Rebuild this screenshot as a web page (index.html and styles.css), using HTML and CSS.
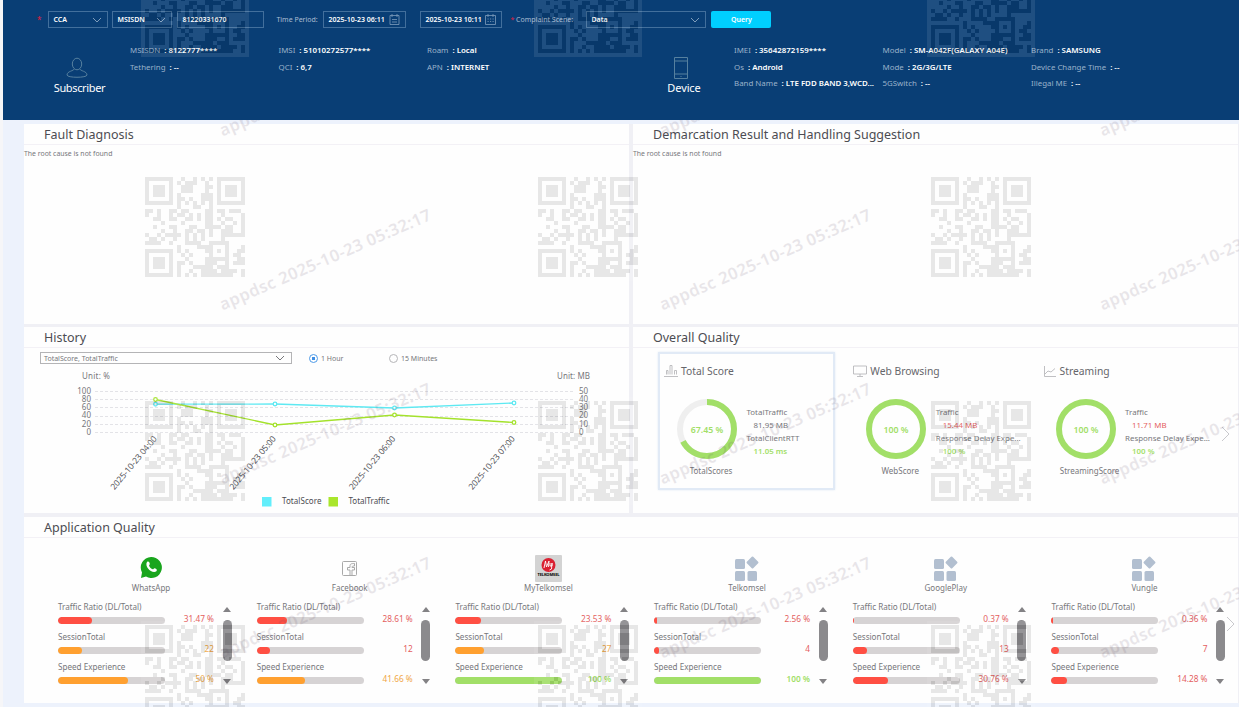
FILE: index.html
```
<!DOCTYPE html>
<html lang="en">
<head>
  <meta charset="UTF-8" />
  <title>Complaint Analysis</title>
  <link rel="stylesheet" href="styles.css">
</head>
<body>
  <header class="top">
    <form class="filters">
      <span class="star">*</span>
      <div class="field w60">CCA <svg class="chev" viewBox="0 0 10 6"><path d="M1 1l4 4 4-4"/></svg></div>
      <div class="field w60 type">MSISDN <svg class="chev" viewBox="0 0 10 6"><path d="M1 1l4 4 4-4"/></svg></div>
      <div class="field w87">81220331670</div>
      <label class="time-label">Time Period:</label>
      <div class="field w83">2025-10-23 06:11 <svg class="cal" viewBox="0 0 11 11"><path d="M1 1.500h9v9H1zM3 0v3M8 0v3M3 5.500h5M3 8h5"/></svg></div>
      <div class="field w82">2025-10-23 10:11 <svg class="cal" viewBox="0 0 11 11"><path d="M.5 1.500h10v9H.5zM3 0v3M8 0v3M2.500 5h1.200M5 5h1.200M7.500 5h1.200M2.500 7.500h1.200M5 7.500h1.200M7.500 7.500h1.200"/></svg></div>
      <label class="scene-label"><span class="star">*</span> Complaint Scene:</label>
      <div class="field w120">Data <svg class="chev" viewBox="0 0 10 6"><path d="M1 1l4 4 4-4"/></svg></div>
      <button type="button" class="query">Query</button>
    </form>

    <div class="info">
      <div class="who">
        <svg class="who-icon" width="22" height="22" viewBox="0 0 22 22"><ellipse cx="11" cy="7" rx="4.700" ry="5.800"/><path d="M8 12c0 2-7 2-7 6 0 3 20 3 20 0 0-4-7-4-7-6"/></svg>
        <span>Subscriber</span>
      </div>
      <dl class="facts">
        <div><dt>MSISDN</dt><dd>8122777****</dd></div>
        <div><dt>IMSI</dt><dd>51010272577****</dd></div>
        <div><dt>Roam</dt><dd>Local</dd></div>
        <div><dt>Tethering</dt><dd>--</dd></div>
        <div><dt>QCI</dt><dd>6,7</dd></div>
        <div><dt>APN</dt><dd>INTERNET</dd></div>
      </dl>
      <div class="who device">
        <svg class="who-icon" width="22" height="22" viewBox="0 0 22 22"><path d="M4.500.5h13v21h-13zM4.500 4h13M4.500 17h13M10.500 19.500h1"/></svg>
        <span>Device</span>
      </div>
      <dl class="facts">
        <div><dt>IMEI</dt><dd>35642872159****</dd></div>
        <div><dt>Model</dt><dd>SM-A042F(GALAXY A04E)</dd></div>
        <div><dt>Brand</dt><dd>SAMSUNG</dd></div>
        <div><dt>Os</dt><dd>Android</dd></div>
        <div><dt>Mode</dt><dd>2G/3G/LTE</dd></div>
        <div><dt>Device Change Time</dt><dd>--</dd></div>
        <div><dt>Band Name</dt><dd>LTE FDD BAND 3,WCD...</dd></div>
        <div><dt>5GSwitch</dt><dd>--</dd></div>
        <div><dt>Illegal ME</dt><dd>--</dd></div>
      </dl>
    </div>
  </header>

  <main class="panels">
    <section class="panel">
      <h2>Fault Diagnosis</h2>
      <p class="empty">The root cause is not found</p>
    </section>
    <section class="panel">
      <h2>Demarcation Result and Handling Suggestion</h2>
      <p class="empty">The root cause is not found</p>
    </section>

    <section class="panel">
      <h2>History</h2>
      <div class="history-bar">
        <div class="metric-select">TotalScore, TotalTraffic <svg class="chev" viewBox="0 0 10 6"><path d="M1 1l4 4 4-4"/></svg></div>
        <label class="radio on"><i></i>1 Hour</label>
        <label class="radio"><i></i>15 Minutes</label>
      </div>
      <svg class="chart" width="605" height="144" viewBox="24 366 605 144">
        <g class="unit"><text x="82" y="379" textLength="28">Unit: %</text><text x="557" y="379" textLength="33">Unit: MB</text></g>
        <path class="grid" d="M95 391.500h480M95 399.500h480M95 407.500h480M95 416.500h480M95 424.500h480M95 432.500h480"/>
        <g class="axis end">
          <text x="91" y="393.500">100</text><text x="91" y="401.500">80</text><text x="91" y="410">60</text>
          <text x="91" y="418">40</text><text x="91" y="426.500">20</text><text x="91" y="434.500">0</text>
        </g>
        <g class="axis">
          <text x="579" y="393.500">50</text><text x="579" y="401.500">40</text><text x="579" y="410">30</text>
          <text x="579" y="418">20</text><text x="579" y="426.500">10</text><text x="579" y="434.500">0</text>
        </g>
        <g class="dates">
          <text transform="translate(157.500 439) rotate(-50)" textLength="67">2025-10-23 04:00</text>
          <text transform="translate(276.500 439) rotate(-50)" textLength="67">2025-10-23 05:00</text>
          <text transform="translate(396 439) rotate(-50)" textLength="67">2025-10-23 06:00</text>
          <text transform="translate(515.500 439) rotate(-50)" textLength="67">2025-10-23 07:00</text>
        </g>
        <g class="score"><path d="M155.500 404.200L275 404l119.500 4L514 403"/><circle cx="155.500" cy="404.200" r="1.800"/><circle cx="275" cy="404" r="1.800"/><circle cx="394.500" cy="408" r="1.800"/><circle cx="514" cy="403" r="1.800"/></g>
        <g class="traffic"><path d="M155.500 399.500L275 425l119.500-10L514 422.500"/><circle cx="155.500" cy="399.500" r="1.800"/><circle cx="275" cy="425" r="1.800"/><circle cx="394.500" cy="415" r="1.800"/><circle cx="514" cy="422.500" r="1.800"/></g>
        <g class="legend">
          <rect x="262" y="497" width="9.500" height="9.500" fill="#62eefb"/><text x="282" y="504" textLength="39.500">TotalScore</text>
          <rect x="328.500" y="497" width="9.500" height="9.500" fill="#a9e62c"/><text x="348.500" y="504" textLength="41">TotalTraffic</text>
        </g>
      </svg>
    </section>

    <section class="panel">
      <h2>Overall Quality</h2>
      <div class="quality">
        <article class="score-card active">
          <h3><svg width="14" height="12" viewBox="0 0 14 12"><path d="M0 11.500h14M2.500 9.500v-4h1.500v4M6 9.500v-9h2v9M10.500 9.500v-4h2v4"/></svg>Total Score</h3>
          <div class="score-body">
            <svg class="ring" viewBox="0 0 60 60"><circle class="track" cx="30" cy="30" r="27"/><circle class="value" cx="30" cy="30" r="27" pathLength="100" stroke-dasharray="67.45 100"/><text x="30" y="33.500">67.45 %</text></svg>
            <dl><dt>TotalTraffic</dt><dd>81.95 MB</dd><dt>TotalClientRTT</dt><dd class="good">11.05 ms</dd></dl>
          </div>
          <p>TotalScores</p>
        </article>
        <article class="score-card">
          <h3><svg width="14" height="12" viewBox="0 0 14 12"><path d="M.5 1h13v8H.5zM7 9v2M4 11.500h6"/></svg>Web Browsing</h3>
          <div class="score-body">
            <svg class="ring" viewBox="0 0 60 60"><circle class="value" cx="30" cy="30" r="27"/><text x="30" y="33.500">100 %</text></svg>
            <dl><dt>Traffic</dt><dd class="bad">15.44 MB</dd><dt>Response Delay Expe...</dt><dd class="good">100 %</dd></dl>
          </div>
          <p>WebScore</p>
        </article>
        <article class="score-card">
          <h3><svg width="14" height="12" viewBox="0 0 14 12"><path d="M1.500 1v10.500H13M2 9l3-3 3 1 4-3.500"/></svg>Streaming</h3>
          <div class="score-body">
            <svg class="ring" viewBox="0 0 60 60"><circle class="value" cx="30" cy="30" r="27"/><text x="30" y="33.500">100 %</text></svg>
            <dl><dt>Traffic</dt><dd class="bad">11.71 MB</dd><dt>Response Delay Expe...</dt><dd class="good">100 %</dd></dl>
          </div>
          <p>StreamingScore</p>
        </article>
        <svg class="next" width="9" height="16" viewBox="0 0 9 16"><path d="M1 1l7 7-7 7"/></svg>
      </div>
    </section>

    <section class="panel wide">
      <h2>Application Quality</h2>
      <div class="apps" id="apps"></div>
      <svg class="next" width="9" height="16" viewBox="0 0 9 16"><path d="M1 1l7 7-7 7"/></svg>
    </section>
  </main>

  <svg class="mark stamp" width="1239" height="707"><g id="stamps"></g></svg>
  <svg class="mark codes" width="1239" height="707">
    <defs><g id="qr"><rect x="-4" y="-4" width="108" height="108" fill="#fff"/><path id="qr-cells" transform="scale(4)"/></g></defs>
    <g id="qr-list"></g>
  </svg>

  <script>
    const tiles = '<svg width="26" height="26" viewBox="0 0 26 26" fill="#b2bfd0"><rect x="1" y="4" width="10" height="10" rx="1.5"/><rect x="1" y="16" width="10" height="10" rx="1.5"/><rect x="13.500" y="16" width="9.500" height="10" rx="1.5"/><rect x="14" y="3" width="9" height="9" rx="1" transform="rotate(45 18.500 7.500)"/></svg>';
    const icons = {
      whatsapp: '<svg width="22" height="24" viewBox="0 0 22 24"><path fill="#19a51d" d="M11 1a10.500 10.500 0 1 1-5 19.500L1 22l1-5.500A10.500 10.500 0 0 1 11 1z"/><path fill="#fff" d="M7 6c1.500-1 2.300 0 2.800 1.800.3 1-.9 1.200-.7 2 .7 1.700 2 2.800 3.600 3.500.8.2 1.200-1.300 2-1 2 .7 2.800 1.500 1.700 2.900C12.500 18.300 4 11 7 6z"/></svg>',
      facebook: '<svg width="16" height="24" viewBox="0 0 16 24" fill="none" stroke="#a9a9a9"><rect x=".5" y="5.500" width="14" height="14" rx="1"/><path d="M8 19v-5H5.500v-2.500H8V10c0-2 1-2.500 4.500-2.500V10c-2 0-2.500.2-2.500 1.500h2.500V14H10v5"/></svg>',
      my: '<svg width="27" height="27" viewBox="0 0 27 27"><rect width="27" height="27" rx="1" fill="#d3d3d3"/><circle cx="13.500" cy="10" r="7" fill="#da2032"/><path d="M9 13l1.500-7 1 6L14 6l-.5 6M15 8v3h2V8l-.5 6-2 1" fill="none" stroke="#fff" stroke-width=".9"/><text x="13.500" y="20.500" text-anchor="middle" font-size="4" font-weight="700" textLength="22">TELKOMSEL</text></svg>',
      tiles
    };
    // [name, icon, three rows of value, bar %, level]
    const apps = [
      ["WhatsApp", "whatsapp", [["31.47 %", 32, "bad"], ["22", 22.5, "warn"], ["50 %", 65, "warn"]]],
      ["Facebook", "facebook", [["28.61 %", 28.5, "bad"], ["12", 12.5, "bad"], ["41.66 %", 45, "warn"]]],
      ["MyTelkomsel", "my", [["23.53 %", 24, "bad"], ["27", 26.5, "warn"], ["100 %", 100, "good"]]],
      ["Telkomsel", "tiles", [["2.56 %", 2.8, "bad"], ["4", 4.8, "bad"], ["100 %", 100, "good"]]],
      ["GooglePlay", "tiles", [["0.37 %", 1, "bad"], ["13", 13.3, "bad"], ["30.76 %", 33, "bad"]]],
      ["Vungle", "tiles", [["0.36 %", 1, "bad"], ["7", 7, "bad"], ["14.28 %", 14.5, "bad"]]]
    ];
    const labels = ["Traffic Ratio (DL/Total)", "SessionTotal", "Speed Experience"];

    document.getElementById("apps").innerHTML = apps.map(([name, icon, rows]) => `
      <article class="app">
        <div class="app-icon">${icons[icon]}</div>
        <h4>${name}</h4>
        <div class="app-body">
          <ul>${rows.map(([value, pct, level], i) => `
            <li class="${level}"><span>${labels[i]}</span><div class="line"><div class="bar"><i style="width:${pct}%"></i></div><b>${value}</b></div></li>`).join("")}
          </ul>
          <div class="scroll"><i class="up"></i><i class="thumb"></i><i class="down"></i></div>
        </div>
      </article>`).join("");

    const qr = [
      "1111111001001010101111111",
      "1000001010111001001000001",
      "1011101001110001101011101",
      "1011101001110001001011101",
      "1011101010000011101011101",
      "1000001011010011101000001",
      "1111111010101010101111111",
      "0000000010001100100000000",
      "1101001101100001101101110",
      "1001001011010101100100001",
      "0011001100110101101011001",
      "0000100001000001100100101",
      "0010001100011001111011001",
      "0000100100110110100111001",
      "1001011110101010100111111",
      "0110100100101010000100000",
      "1111001000111100111110000",
      "0000000010000111100010001",
      "1111111010100001101010011",
      "1000001001010000100010110",
      "1011101000100001111110011",
      "1011101011010001110010111",
      "1011101010001111101110000",
      "1000001010010011110111101",
      "1111111010101011111111001"
    ];
    let d = "";
    qr.forEach((row, y) => [...row].forEach((c, x) => { if (c === "1") d += `M${x} ${y}h1v1h-1z`; }));
    document.getElementById("qr-cells").setAttribute("d", d);

    let codes = "", stamps = "";
    for (const x of [145, 538, 931])
      for (const y of [-47, 177, 401, 625]) codes += `<use href="#qr" x="${x}" y="${y}"/>`;
    for (const x of [222.5, 662.5, 1102.5])
      for (const y of [136.5, 310.5, 484.5, 658.5]) stamps += `<text transform="translate(${x} ${y}) rotate(-23.500)" textLength="229">appdsc 2025-10-23 05:32:17</text>`;
    document.getElementById("qr-list").innerHTML = codes;
    document.getElementById("stamps").innerHTML = stamps;
  </script>
</body>
</html>
```

FILE: styles.css
```
* {
  box-sizing: border-box;
}

body {
  margin: 0;
  width: 1239px;
  height: 707px;
  overflow: hidden;
  padding-left: 3px;
  background: linear-gradient(to right, #f6f6f8 3px, #edf2fc 3px);
  font-family: "Noto Sans", sans-serif;
  font-size: 8px;
  color: #77777b;
  position: relative;
}

h2, h3, h4, p, dl, dd, ul {
  margin: 0;
  padding: 0;
  font-weight: 400;
}

svg text {
  font-family: "Noto Sans", sans-serif;
}

/* header */
.top {
  position: relative;
  z-index: 2;
  height: 120px;
  background: #093e75;
  color: #fff;
}

.filters {
  display: flex;
  align-items: center;
  height: 28px;
  padding: 11px 0 0 34px;
}

.filters .star {
  color: #e0203c;
  margin-right: 7px;
}

.field {
  display: flex;
  align-items: center;
  justify-content: space-between;
  height: 17px;
  padding: 0 5px 0 4px;
  margin-right: 5px;
  border: 1px solid #426f9c;
  font-size: 7px;
  font-weight: 600;
  white-space: nowrap;
}

.w60 { width: 60px; margin-right: 4px; }
.w60.type { margin-right: 5px; }
.w87 { width: 87px; }
.w83 { width: 83px; margin-right: 14px; }
.w82 { width: 82px; margin-right: 8px; }
.w120 { width: 120px; }

.chev {
  width: 10px;
  height: 6px;
  fill: none;
  stroke: #7f9dbb;
}

.cal {
  width: 11px;
  height: 11px;
  fill: none;
  stroke: #7f9dbb;
  stroke-width: .8;
}

.time-label, .scene-label {
  color: #a9bdd2;
  font-size: 7px;
  white-space: nowrap;
}

.time-label {
  width: 47px;
  margin-left: 7px;
}

.scene-label {
  width: 76px;
}

.filters .scene-label .star {
  margin: 0;
}

.query {
  width: 60px;
  height: 17px;
  padding: 0;
  border: 0;
  border-radius: 2px;
  background: #00cfff;
  color: #fff;
  font: 600 7px "Noto Sans", sans-serif;
}

.info {
  display: flex;
  padding: 15px 0 0 50px;
}

.who {
  display: flex;
  flex-direction: column;
  align-items: center;
  width: 53px;
  margin-right: 24px;
  padding-top: 14px;
  font-size: 11px;
  line-height: 17px;
  letter-spacing: -.35px;
}

.who-icon {
  fill: none;
  stroke: #56809f;
  margin-left: -6px;
}

.who.device {
  width: 44px;
  margin: 0 28px 0 77px;
  letter-spacing: -.1px;
}

.facts {
  display: grid;
  grid-template-columns: 148.500px 148.500px 158px;
  grid-auto-rows: 16.500px;
  font-size: 7.900px;
  line-height: 15.500px;
}

.facts div {
  display: flex;
  white-space: nowrap;
}

.facts dt {
  color: #9ab2ca;
}

.facts dd {
  font-weight: 600;
}

.facts dd::before {
  content: ":";
  margin: 0 2px 0 4px;
}

/* panels */
.panels {
  display: grid;
  grid-template-columns: 605px 605px;
  grid-template-rows: 200px 186px 187px;
  gap: 3px 4px;
  margin: 4px 0 0 21px;
  background: #f0f0f5;
}

.panel {
  position: relative;
  background: #fefefe;
}

.panel h2 {
  height: 21px;
  padding-left: 20px;
  border-bottom: 1px solid #f3f1f6;
  font-size: 12.500px;
  line-height: 22px;
  color: #4c4c52;
}

.wide {
  grid-column: 1 / 3;
  margin-top: 1px;
}

.empty {
  font-size: 6.900px;
  line-height: 18px;
}

.history-bar {
  display: flex;
  align-items: center;
  height: 20px;
  padding-left: 16px;
  font-size: 7px;
}

.metric-select {
  display: flex;
  align-items: center;
  justify-content: space-between;
  width: 252px;
  height: 12px;
  padding: 0 6px 0 3px;
  border: 1px solid #b4b4b6;
}

.metric-select .chev {
  stroke: #77777b;
}

.radio {
  display: flex;
  align-items: center;
  gap: 3px;
  width: 80px;
  margin-left: 17px;
}

.radio + .radio {
  margin-left: 0;
}

.radio i {
  width: 9px;
  height: 9px;
  border: 1px solid #b5b5b8;
  border-radius: 50%;
}

.radio.on i {
  border-color: #4e9be8;
  background: radial-gradient(#3f8fe4 1.500px, #fff 2px);
}

.chart {
  display: block;
  margin-top: -2px;
}

.unit, .axis {
  font-size: 8px;
  fill: #77777b;
}

.end {
  text-anchor: end;
}

.grid {
  stroke: #e3e3e7;
  stroke-dasharray: 3 2;
}

.dates {
  font-size: 8.500px;
  fill: #55555a;
  text-anchor: end;
}

.legend {
  font-size: 8px;
  fill: #4c4c52;
}

.score {
  fill: #fff;
  stroke: #5ee9f2;
  stroke-width: 1.300;
}

.traffic {
  fill: #fff;
  stroke: #a4e22c;
  stroke-width: 1.300;
}

.score path, .traffic path {
  fill: none;
}

.quality {
  display: flex;
  padding: 4px 0 0 24.500px;
}

.score-card {
  width: 177.500px;
  height: 138px;
  margin-right: 11.800px;
  padding: 9px 0 0 4.500px;
  border: 2px solid transparent;
}

.score-card.active {
  border-color: #e1eaf6;
  box-shadow: 0 0 2px #e1eaf6;
}

.score-card h3 {
  display: flex;
  align-items: center;
  gap: 3px;
  height: 16px;
  font-size: 10.300px;
  color: #66666b;
}

.score-card h3 svg {
  fill: none;
  stroke: #b0b0b4;
  stroke-width: .8;
}

.score-body {
  display: flex;
  gap: 9.500px;
  margin: 20px 0 0 13px;
}

.ring {
  width: 60px;
  height: 60px;
}

.ring circle {
  fill: none;
  stroke-width: 6;
}

.ring .track {
  stroke: #efefef;
}

.ring .value {
  stroke: #a2df68;
  transform: rotate(-90deg);
  transform-origin: 30px 30px;
}

.ring text {
  fill: #a2df68;
  font-size: 8.800px;
  font-weight: 600;
  text-anchor: middle;
}

.score-card dl {
  padding-top: 6.500px;
  font-size: 7.900px;
  line-height: 13.300px;
  white-space: nowrap;
}

.score-card dd {
  padding-left: 7px;
}

.score-card p {
  width: 94px;
  margin-top: 6px;
  text-align: center;
}

.bad { color: #e4605f; }
.good { color: #a2df68; }
.warn { color: #f0a645; }

.score-card .good {
  font-weight: 600;
}

.next {
  position: absolute;
  right: 8px;
  top: 99px;
  fill: none;
  stroke: #c9c9cd;
}

.wide .next {
  right: 3px;
}

/* applications */
.apps {
  display: grid;
  grid-template-columns: repeat(6, 198.700px);
  padding: 15px 0 0 34px;
}

.app {
  width: 187px;
}

.app-icon {
  display: flex;
  align-items: center;
  justify-content: center;
  width: 186px;
  height: 30px;
}

.app h4 {
  width: 186px;
  line-height: 10px;
  text-align: center;
  font-size: 8px;
}

.app-body {
  display: flex;
  gap: 8.500px;
  padding-top: 8px;
}

.app ul {
  width: 156px;
  list-style: none;
}

.app li {
  height: 30px;
}

.app li span {
  display: block;
  font-size: 8.100px;
  line-height: 12px;
  color: #77777b;
}

.line {
  display: flex;
  justify-content: space-between;
  align-items: center;
  height: 14px;
}

.line b {
  font-size: 8.300px;
  font-weight: 400;
  margin-top: -3px;
}

.good .line b {
  font-weight: 600;
}

.bar {
  width: 107px;
  height: 7px;
  border-radius: 4px;
  background: #d6d3d4;
  overflow: hidden;
}

.bar i {
  display: block;
  height: 100%;
  border-radius: 4px;
  background: #ff4f43;
}

.warn .bar i { background: #ffa030; }
.good .bar i { background: #a2df68; }

.scroll {
  display: flex;
  flex-direction: column;
  align-items: center;
  width: 9px;
  padding-top: 6px;
}

.up, .down {
  border: 4.500px solid transparent;
  border-top-width: 0;
  border-bottom: 5px solid #838285;
}

.down {
  border-top: 5px solid #838285;
  border-bottom-width: 0;
}

.thumb {
  width: 9px;
  height: 41px;
  margin: 8px 0 18px;
  border-radius: 5px;
  background: #8b8a8d;
}

/* watermarks */
.mark {
  position: absolute;
  left: 0;
  top: 0;
  pointer-events: none;
}

.stamp {
  z-index: 1;
  font-size: 16.500px;
  font-weight: 600;
  fill: #5a4660;
  opacity: .13;
}

.codes {
  z-index: 3;
  opacity: .088;
}
```
